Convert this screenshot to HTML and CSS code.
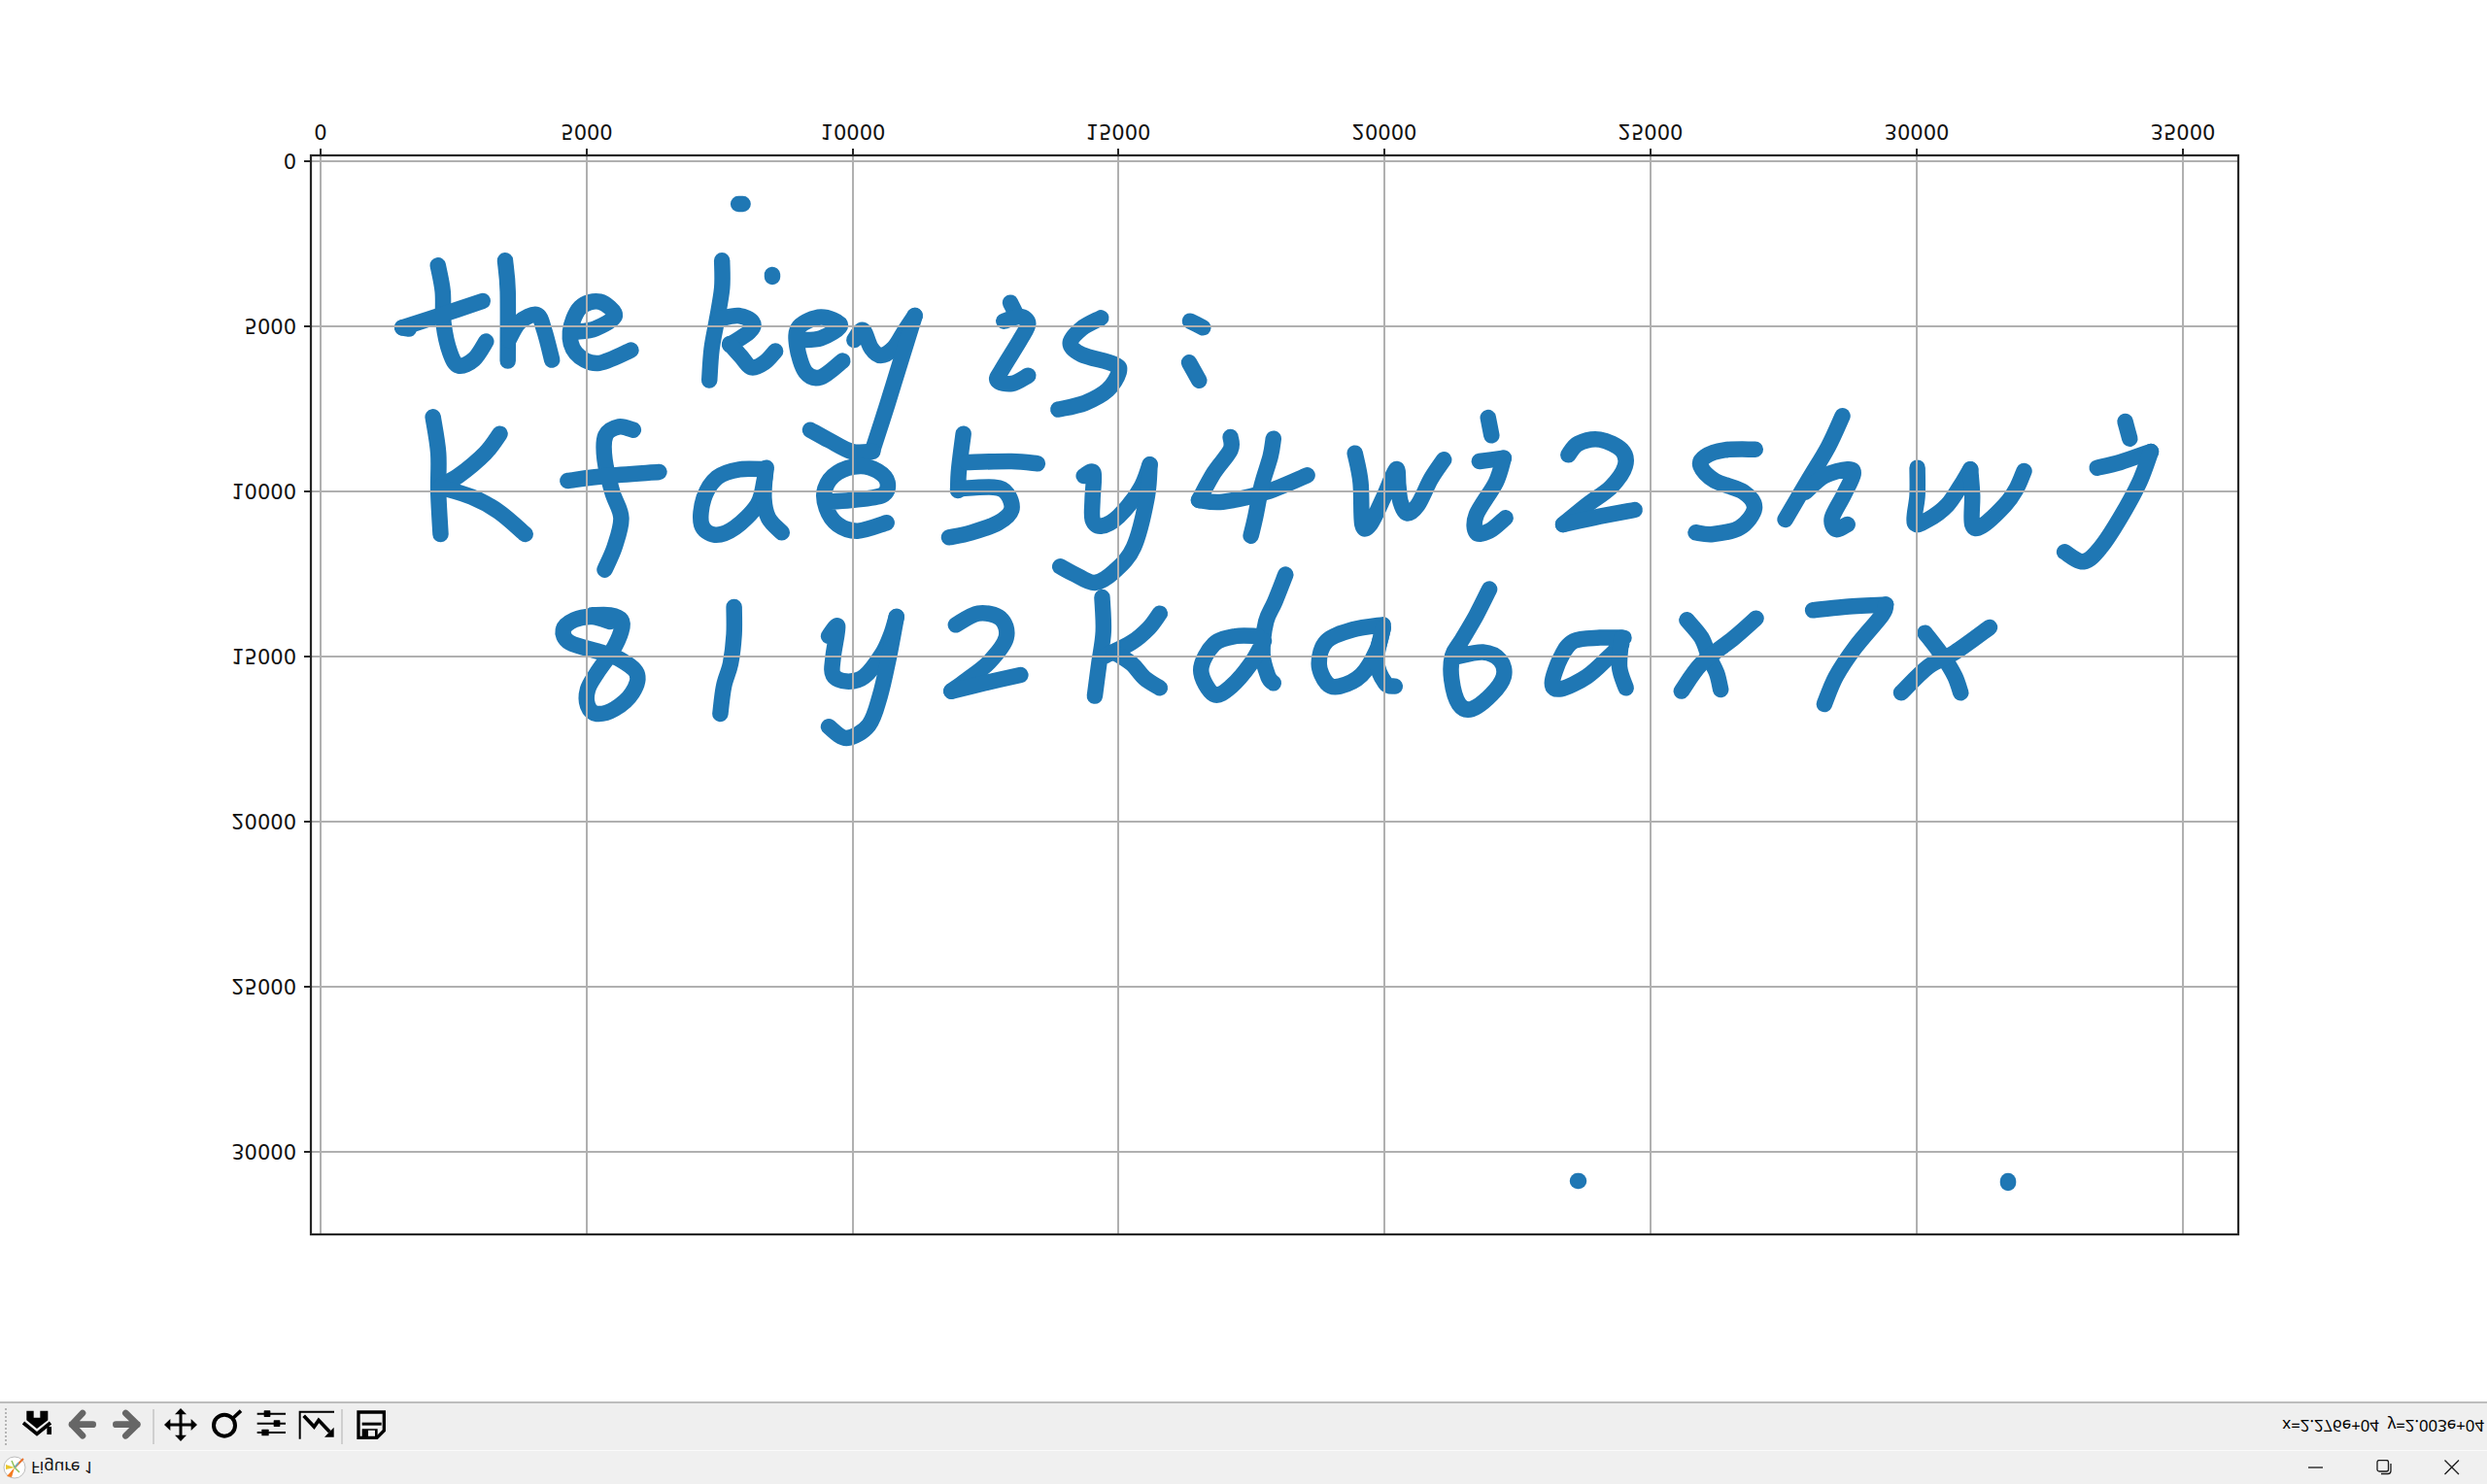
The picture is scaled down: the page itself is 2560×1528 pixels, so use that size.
FILE: index.html
```html
<!DOCTYPE html>
<html lang="en">
<head>
    <meta charset="UTF-8">
    <title>Figure 1</title>
    <link rel="stylesheet" href="styles.css">
</head>
<body>
<div class="window">
    <div class="plot">
        <svg class="figure" width="2560" height="1443" viewBox="0 0 2560 1443">
            <g id="ink"></g>

            <g class="grid">
                <path d="M330 160V1271M604 160V1271M878 160V1271M1151 160V1271M1425 160V1271M1699 160V1271M1973 160V1271M2247 160V1271"/>
                <path d="M320 166H2304M320 336H2304M320 506H2304M320 676H2304M320 846H2304M320 1016H2304M320 1186H2304"/>
            </g>

            <g class="ticks">
                <path d="M330 153V160M604 153V160M878 153V160M1151 153V160M1425 153V160M1699 153V160M1973 153V160M2247 153V160"/>
                <path d="M313 166H320M313 336H320M313 506H320M313 676H320M313 846H320M313 1016H320M313 1186H320"/>
            </g>
            <rect class="spine" x="320" y="160" width="1984" height="1111"/>

            <g class="xlabels">
                <text transform="matrix(1 0 0 -1 330 128)">0</text>
                <text transform="matrix(1 0 0 -1 604 128)">5000</text>
                <text transform="matrix(1 0 0 -1 878 128)">10000</text>
                <text transform="matrix(1 0 0 -1 1151 128)">15000</text>
                <text transform="matrix(1 0 0 -1 1425 128)">20000</text>
                <text transform="matrix(1 0 0 -1 1699 128)">25000</text>
                <text transform="matrix(1 0 0 -1 1973 128)">30000</text>
                <text transform="matrix(1 0 0 -1 2247 128)">35000</text>
            </g>
            <g class="ylabels">
                <text transform="matrix(1 0 0 -1 305 158)">0</text>
                <text transform="matrix(1 0 0 -1 305 328)">5000</text>
                <text transform="matrix(1 0 0 -1 305 498)">10000</text>
                <text transform="matrix(1 0 0 -1 305 668)">15000</text>
                <text transform="matrix(1 0 0 -1 305 838)">20000</text>
                <text transform="matrix(1 0 0 -1 305 1008)">25000</text>
                <text transform="matrix(1 0 0 -1 305 1178)">30000</text>
            </g>
        </svg>
    </div>

    <div class="toolbar">
        <span class="grip"></span>
        <svg class="tool tool-first" viewBox="0 0 120 120">
            <path d="M28 11H50V32H70V11H94V40L60 66L28 40Z"/>
            <path class="line" d="M18 48L60 82L102 48" stroke-width="11"/>
            <rect x="91" y="60" width="14" height="24"/>
        </svg>
        <svg class="tool" viewBox="0 0 120 120">
            <path class="arrow" d="M63 18L30 53L63 88M30 53H95"/>
        </svg>
        <svg class="tool" viewBox="0 0 120 120">
            <path class="arrow" d="M58 18L94 53L58 88M94 53H28"/>
        </svg>
        <span class="sep"></span>
        <svg class="tool" viewBox="0 0 120 120">
            <path class="line" d="M18 54H102M60 12V96" stroke-width="9"/>
            <path d="M9 54L28 36V72ZM111 54L92 36V72ZM60 3L42 22H78ZM60 105L42 86H78Z"/>
        </svg>
        <svg class="tool" viewBox="0 0 120 120">
            <circle class="line" cx="57" cy="56" r="33" stroke-width="12"/>
            <path class="line" d="M84 33L108 11" stroke-width="11"/>
        </svg>
        <svg class="tool" viewBox="0 0 120 120">
            <path class="line" d="M20 20H108M20 50H108M20 78H108" stroke-width="6"/>
            <rect x="41" y="10" width="20" height="20" rx="2"/>
            <rect x="71" y="40" width="20" height="20" rx="2"/>
            <rect x="34" y="68" width="22" height="20" rx="2"/>
        </svg>
        <svg class="tool" viewBox="0 0 120 120">
            <path class="line" d="M14 98V14H120" stroke-width="6"/>
            <path class="line" d="M26 26L58 60L72 40L106 76" stroke-width="11"/>
            <path d="M119 92V62L90 92Z"/>
        </svg>
        <span class="sep"></span>
        <svg class="tool tool-last" viewBox="0 0 120 120">
            <path class="line" d="M27 15H106V72L84 94H27Z" stroke-width="10"/>
            <rect x="38" y="47" width="60" height="9"/>
            <path d="M38 67H86V94H38ZM57 71V90H78V71Z" fill-rule="evenodd"/>
        </svg>
        <span class="coords flip">x=2.276e+04 &nbsp;y=2.003e+04</span>
    </div>

    <div class="titlebar">
        <svg class="appicon" viewBox="0 0 24 24">
            <circle cx="12" cy="12" r="11" fill="#fff" stroke="#bdbdbd"/>
            <path d="M12 12L4 21L9 22Z" fill="#f47b20"/>
            <path d="M12 12L21 3" stroke="#e8702a" stroke-width="2"/>
            <path d="M12 12L3 9L3 14Z" fill="#e9c62f"/>
            <path d="M12 12L9 5M12 12L17 17" stroke="#8fc25a" stroke-width="1.5"/>
            <path d="M12 12L16 7" stroke="#6db4c9" stroke-width="1.5"/>
        </svg>
        <span class="title flip">Figure 1</span>
        <div class="winbtns">
            <span class="winbtn"><svg width="16" height="16" viewBox="0 0 16 16"><path d="M0 8H15"/></svg></span>
            <span class="winbtn"><svg width="16" height="16" viewBox="0 0 16 16"><path d="M3 .5H10.5A2 2 0 0 1 12.5 2.5V10A2 2 0 0 1 10.5 12H3A2 2 0 0 1 1 10V2.500A2 2 0 0 1 3 .5ZM15 4V11.500A3 3 0 0 1 12 14.500H5"/></svg></span>
            <span class="winbtn"><svg width="16" height="16" viewBox="0 0 16 16"><path d="M.5 .5L15 15M15 .5L.5 15"/></svg></span>
        </div>
    </div>
</div>
<script src="script.js"></script>
</body>
</html>
```

FILE: styles.css
```css
*{
    margin: 0px;
    padding: 0px;
    box-sizing: border-box;
}

body{
    background-color: #ffffff;
    overflow: hidden;
}

.window{
    height: 100vh;
    display: flex;
    flex-direction: column;
}

.plot{
    flex: 1;
    background-color: #ffffff;
}

.figure{
    display: block;
}

.ink-line{
    fill: none;
    stroke: #1f77b4;
    stroke-width: 16.5;
    stroke-linecap: round;
    stroke-linejoin: round;
}

.grid path{
    fill: none;
    stroke: #b0b0b0;
    stroke-width: 2;
}

.ticks path{
    fill: none;
    stroke: #262626;
    stroke-width: 2;
}

.spine{
    fill: none;
    stroke: #262626;
    stroke-width: 2.2;
}

.xlabels text, .ylabels text{
    font-family: "DejaVu Sans", sans-serif;
    font-size: 21px;
    fill: #111111;
}

.xlabels text{
    text-anchor: middle;
}

.ylabels text{
    text-anchor: end;
}

.toolbar{
    height: 51px;
    display: flex;
    align-items: center;
    gap: 6px;
    padding-left: 5px;
    padding-bottom: 1px;
    background-color: #efefef;
    border-top: 2px solid #bdbdbd;
    border-bottom: 1px solid #fafafa;
}

.grip{
    width: 2px;
    height: 38px;
    margin-right: 5px;
    border-left: 2px dotted #b5b5b5;
}

.tool{
    width: 40px;
    height: 40px;
    flex: none;
    fill: #000000;
}

.line{
    fill: none;
    stroke: #000000;
}

.arrow{
    fill: none;
    stroke: #666666;
    stroke-width: 20;
    stroke-linecap: round;
    stroke-linejoin: round;
}

.sep{
    width: 2px;
    height: 36px;
    margin: 0 1px;
    background-color: #cfcfcf;
}

.coords{
    margin-left: auto;
    padding-right: 3px;
    font-family: "Noto Sans", sans-serif;
    font-size: 16.8px;
    white-space: nowrap;
    color: #000000;
}

.flip{
    display: inline-block;
    transform: scaleY(-1);
}

.titlebar{
    height: 34px;
    display: flex;
    align-items: center;
    padding-left: 3px;
    background-color: #f0f0f0;
}

.appicon{
    width: 24px;
    height: 24px;
}

.title{
    margin-left: 5px;
    font-family: "Noto Sans", sans-serif;
    font-size: 17px;
    color: #111111;
}

.winbtns{
    margin-left: auto;
    margin-right: 1px;
    display: flex;
}

.winbtn{
    width: 70px;
    height: 34px;
    display: flex;
    align-items: center;
    justify-content: center;
}

.winbtn path{
    fill: none;
    stroke: #1a1a1a;
    stroke-width: 1.3;
}
```

FILE: script.js
```js
// pen strokes of the plot, every group is read in its own scale
var groups=[
    {x:220,y:100,sx:0.4464,sy:0.3333,lines:[
        [[1210,330],[1220,330]],
        [[1288,549],[1288,555]],
        [[517,520],[528,600],[530,700],[545,790],[565,830],[600,810],[628,755]],
        [[435,712],[520,675],[620,630]],
        [[435,712],[450,716]],
        [[672,505],[678,600],[678,815]],
        [[680,750],[705,695],[745,672],[762,720],[780,812]],
        [[835,725],[880,715],[925,675],[890,632],[845,650],[822,725],[835,790],[885,822],[962,782]],
        [[1172,505],[1172,590],[1160,690],[1148,780],[1143,875]],
        [[1165,685],[1210,675],[1242,695],[1235,725],[1190,765]],
        [[1190,762],[1215,800],[1240,835],[1270,820],[1295,785]],
        [[1350,750],[1400,745],[1445,705],[1400,680],[1350,710],[1345,770],[1365,850],[1400,865],[1450,815]]
    ]},
    {x:820,y:290,sx:0.3333,sy:0.3333,lines:[
        [[178,180],[205,150],[230,205],[260,228],[300,205],[335,150],[365,105]],
        [[365,105],[320,250],[280,380],[235,520]],
        [[42,458],[100,490],[170,525],[235,525]]
    ]},
    {x:1000,y:240,sx:0.3333,sy:0.3333,lines:[
        [[120,215],[135,245]],
        [[100,272],[150,258],[175,280],[150,330],[95,420],[80,455],[125,465],[175,440]],
        [[400,262],[340,295],[305,340],[340,375],[440,405],[455,430],[420,485],[350,525],[268,545]],
        [[675,272],[715,292]],
        [[672,400],[703,455]]
    ]},
    {x:380,y:400,sx:0.4592,sy:0.3333,lines:[
        [[143,88],[155,200],[155,320],[160,450]],
        [[293,140],[260,200],[200,270],[160,300]],
        [[160,305],[230,335],[290,380],[350,450]],
        [[592,128],[560,118],[530,145],[528,220],[545,320],[565,400],[550,490],[528,560]],
        [[445,285],[530,270],[650,258]],
        [[890,250],[830,250],[780,275],[750,340],[745,420],[775,452],[820,430],[870,360],[885,290],[890,245]],
        [[888,260],[885,340],[895,400],[925,445]],
        [[1025,350],[1080,345],[1150,330],[1162,290],[1140,255],[1100,240],[1050,260],[1022,310],[1025,370],[1050,420],[1095,440],[1160,415]],
        [[1332,140],[1322,250],[1320,315]],
        [[1340,228],[1440,225],[1498,232]],
        [[1320,310],[1400,305],[1430,325],[1440,375],[1410,415],[1350,445],[1300,460]],
        [[540,720],[500,705],[460,715],[435,745],[450,785],[520,815],[560,835],[600,880],[590,940],[550,990],[510,1005],[490,980],[490,930],[510,880],[545,810],[565,750],[565,715],[540,700],[500,700]],
        [[818,675],[818,760],[810,850],[795,920],[787,1005]],
        [[1030,765],[1050,735],[1040,830],[1040,885],[1070,905],[1110,890],[1150,820],[1170,760],[1182,705]],
        [[1182,705],[1165,830],[1145,950],[1120,1040],[1070,1080],[1030,1045]],
        [[1315,730],[1365,695],[1415,710],[1428,770],[1390,845],[1340,900],[1305,935]],
        [[1305,935],[1380,910],[1460,885]]
    ]},
    {x:1080,y:400,sx:0.4464,sy:0.3333,lines:[
        [[80,270],[102,260],[100,340],[100,405],[120,425],[160,395],[210,310],[232,235]],
        [[232,235],[225,340],[195,490],[150,565],[105,600],[60,575],[25,550]],
        [[418,150],[418,190],[380,260],[345,345]],
        [[345,345],[400,350],[500,320],[595,268]],
        [[517,155],[510,210],[490,300],[475,400],[465,455]],
        [[705,200],[718,290],[722,420],[740,420],[770,340],[800,250],[805,300],[810,350],[825,385],[850,360],[880,280],[910,220]],
        [[1012,90],[1020,145]],
        [[992,225],[1048,215]],
        [[1048,215],[1030,290],[985,390],[985,445],[1015,440],[1052,400]],
        [[1197,205],[1220,170],[1270,158],[1320,190],[1328,240],[1295,305],[1240,360],[1185,420]],
        [[1185,420],[1270,395],[1350,375]],
        [[122,645],[125,750],[115,850],[105,950]],
        [[255,695],[230,740],[190,785],[130,825]],
        [[150,815],[190,850],[220,895],[255,925]],
        [[545,575],[520,660],[500,720],[492,820],[505,890],[517,910]],
        [[480,765],[430,765],[380,790],[350,870],[380,945],[420,920],[465,850],[495,780]],
        [[770,730],[700,745],[640,780],[622,850],[640,910],[670,920],[720,885],[755,810],[770,740]],
        [[770,740],[755,840],[775,910],[797,920]],
        [[1015,620],[985,700],[950,780],[930,825],[928,900],[945,975],[975,990],[1020,945],[1048,890],[1040,840],[1000,815],[935,830]],
        [[1325,770],[1270,770],[1210,780],[1180,830],[1160,910],[1180,928],[1240,890],[1290,830],[1320,790]],
        [[1320,770],[1315,860],[1330,925]]
    ]},
    {x:1700,y:400,sx:0.3954,sy:0.3333,lines:[
        [[92,715],[130,770],[150,830],[170,880],[180,930]],
        [[272,710],[215,770],[130,850],[78,935]],
        [[420,685],[500,675],[610,668]],
        [[610,668],[600,700],[530,800],[480,890],[450,975]],
        [[712,755],[760,830],[790,890],[805,940]],
        [[880,738],[790,815],[720,860],[650,940]],
        [[270,188],[190,190],[140,210],[128,240],[165,285],[240,320],[268,370],[230,430],[160,450],[115,445]],
        [[497,85],[460,180],[410,280],[348,405]],
        [[400,320],[450,270],[510,250],[525,265],[500,330],[470,400],[480,435],[510,420]],
        [[692,245],[692,330],[685,415],[720,405],[770,360],[810,290],[830,250]],
        [[830,250],[835,330],[835,420],[860,425],[920,360],[950,310],[970,255]],
        [[1233,102],[1245,155]],
        [[1160,245],[1220,228],[1300,195]],
        [[1300,195],[1270,290],[1220,400],[1170,490],[1125,535],[1075,505]]
    ]},
    {x:0,y:0,sx:1,sy:1,lines:[
        [[1624,1216],[1625,1216]],
        [[2067,1216],[2067,1218]]
    ]}
];

var ink=document.getElementById("ink");

// catmull-rom through the points, so the pen line stays round
function smooth(pts) {
    var d="M"+pts[0][0]+" "+pts[0][1];
    for(var i=0;i<pts.length-1;i++){
        var p0=pts[i-1]||pts[i];
        var p1=pts[i];
        var p2=pts[i+1];
        var p3=pts[i+2]||p2;
        d+="C"+(p1[0]+(p2[0]-p0[0])/6).toFixed(1)+" "+(p1[1]+(p2[1]-p0[1])/6).toFixed(1)+" "
            +(p2[0]-(p3[0]-p1[0])/6).toFixed(1)+" "+(p2[1]-(p3[1]-p1[1])/6).toFixed(1)+" "
            +p2[0].toFixed(1)+" "+p2[1].toFixed(1);
    }
    return d;
}

for(var g=0;g<groups.length;g++){
    var group=groups[g];
    for(var l=0;l<group.lines.length;l++){
        var pts=group.lines[l].map(function (p) {
            return [group.x+p[0]*group.sx,group.y+p[1]*group.sy];
        });
        var path=document.createElementNS("http://www.w3.org/2000/svg","path");
        path.setAttribute("class","ink-line");
        path.setAttribute("d",smooth(pts));
        ink.appendChild(path);
    }
}
```
